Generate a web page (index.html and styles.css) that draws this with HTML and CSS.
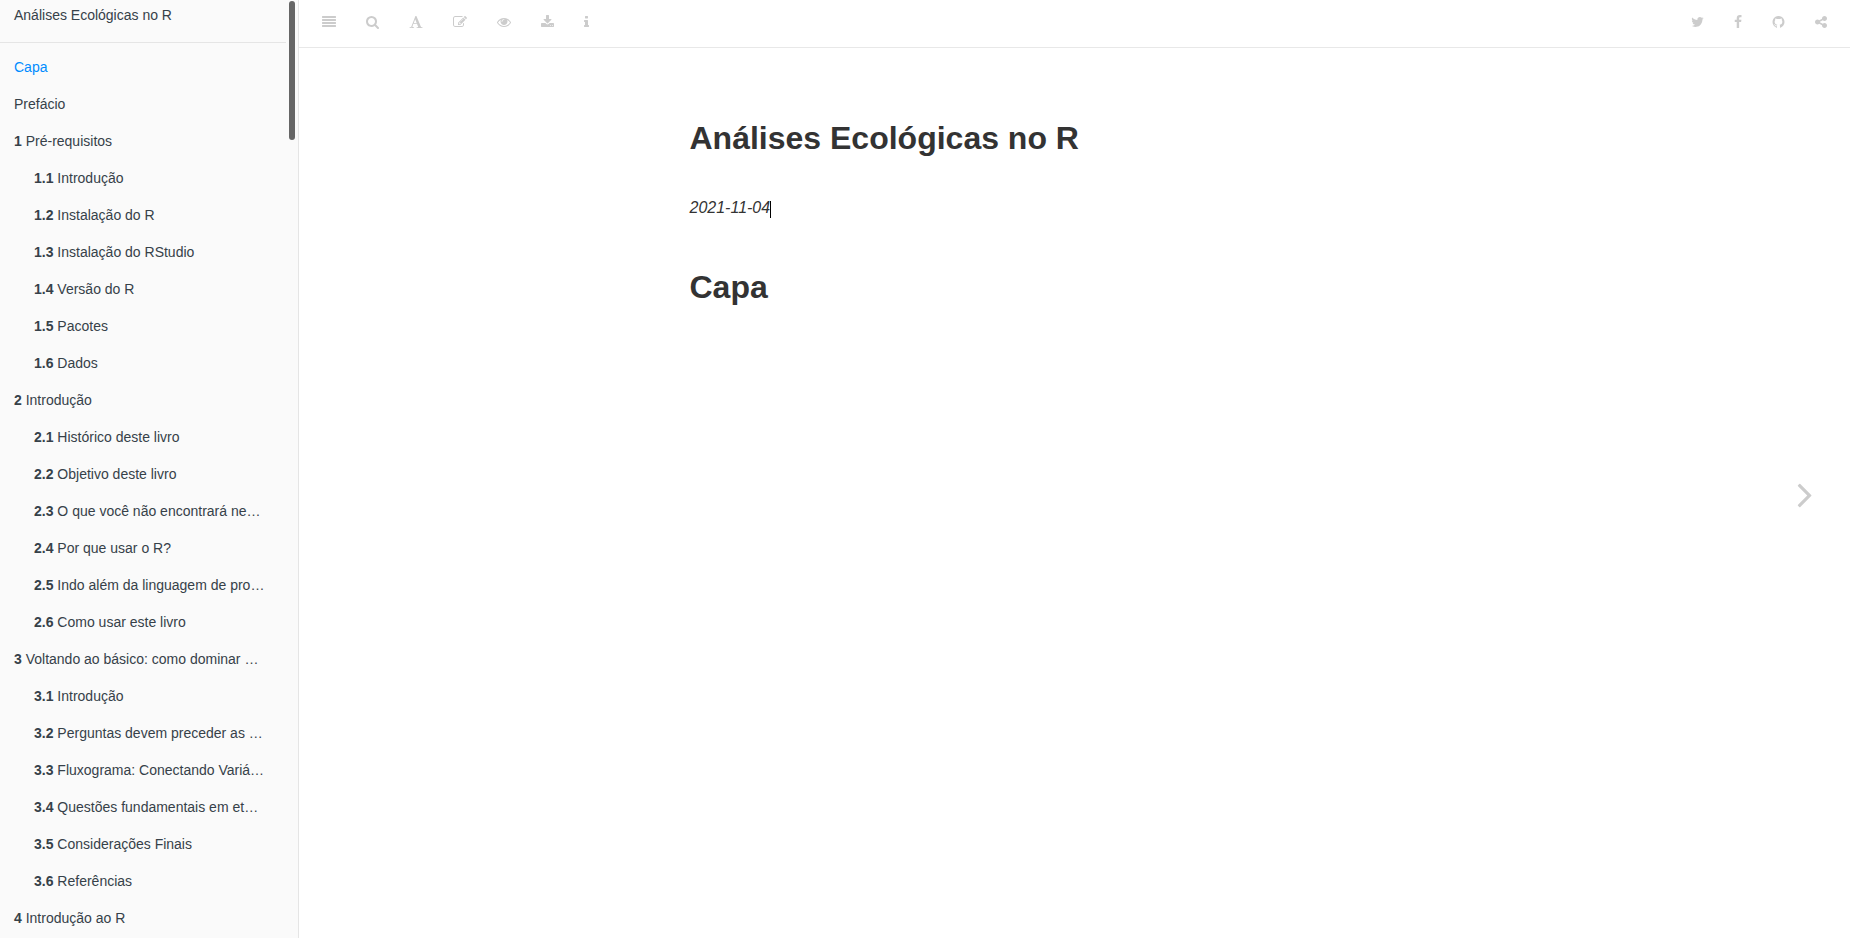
FILE: index.html
```html
<!DOCTYPE html>
<html lang="pt-BR">
<head>
<meta charset="utf-8">
<title>Análises Ecológicas no R</title>
<link rel="stylesheet" href="styles.css">
</head>
<body>
<div class="book">
  <aside class="sidebar">
    <nav class="summary" aria-label="Sumário">
      <a class="book-title" href="#">Análises Ecológicas no R</a>
      <ul class="chapters">
        <li><a class="active" href="#">Capa</a></li>
        <li><a href="#">Prefácio</a></li>
        <li><a href="#"><b>1</b> Pré-requisitos</a>
          <ul>
            <li><a href="#"><b>1.1</b> Introdução</a></li>
            <li><a href="#"><b>1.2</b> Instalação do R</a></li>
            <li><a href="#"><b>1.3</b> Instalação do RStudio</a></li>
            <li><a href="#"><b>1.4</b> Versão do R</a></li>
            <li><a href="#"><b>1.5</b> Pacotes</a></li>
            <li><a href="#"><b>1.6</b> Dados</a></li>
          </ul>
        </li>
        <li><a href="#"><b>2</b> Introdução</a>
          <ul>
            <li><a href="#"><b>2.1</b> Histórico deste livro</a></li>
            <li><a href="#"><b>2.2</b> Objetivo deste livro</a></li>
            <li><a href="#"><b>2.3</b> O que você não encontrará ne…</a></li>
            <li><a href="#"><b>2.4</b> Por que usar o R?</a></li>
            <li><a href="#"><b>2.5</b> Indo além da linguagem de pro…</a></li>
            <li><a href="#"><b>2.6</b> Como usar este livro</a></li>
          </ul>
        </li>
        <li><a href="#"><b>3</b> Voltando ao básico: como dominar …</a>
          <ul>
            <li><a href="#"><b>3.1</b> Introdução</a></li>
            <li><a href="#"><b>3.2</b> Perguntas devem preceder as …</a></li>
            <li><a href="#"><b>3.3</b> Fluxograma: Conectando Variá…</a></li>
            <li><a href="#"><b>3.4</b> Questões fundamentais em et…</a></li>
            <li><a href="#"><b>3.5</b> Considerações Finais</a></li>
            <li><a href="#"><b>3.6</b> Referências</a></li>
          </ul>
        </li>
        <li><a href="#"><b>4</b> Introdução ao R</a></li>
      </ul>
    </nav>
    <div class="scroll-thumb"></div>
  </aside>
  <div class="page">
    <header class="toolbar">
      <div class="tools">
        <button type="button" aria-label="Sumário"><svg class="w14" viewBox="0 0 1792 1792"><path d="M1792 1344v128q0 26-19 45t-45 19h-1664q-26 0-45-19t-19-45v-128q0-26 19-45t45-19h1664q26 0 45 19t19 45zm0-384v128q0 26-19 45t-45 19h-1664q-26 0-45-19t-19-45v-128q0-26 19-45t45-19h1664q26 0 45 19t19 45zm0-384v128q0 26-19 45t-45 19h-1664q-26 0-45-19t-19-45v-128q0-26 19-45t45-19h1664q26 0 45 19t19 45zm0-384v128q0 26-19 45t-45 19h-1664q-26 0-45-19t-19-45v-128q0-26 19-45t45-19h1664q26 0 45 19t19 45z"/></svg></button>
        <button type="button" aria-label="Buscar"><svg class="w13" viewBox="64 0 1664 1792"><path d="M1216 832q0-185-131.5-316.5t-316.5-131.5-316.5 131.5-131.5 316.5 131.5 316.5 316.5 131.5 316.5-131.5 131.5-316.5zm512 832q0 52-38 90t-90 38q-54 0-90-38l-343-342q-179 124-399 124-143 0-273.5-55.5t-225-150-150-225-55.5-273.5 55.5-273.5 150-225 225-150 273.5-55.5 273.5 55.5 225 150 150 225 55.5 273.5q0 220-124 399l343 343q37 37 37 90z"/></svg></button>
        <button type="button" aria-label="Fonte"><svg class="w14" viewBox="0 0 1792 1792"><path d="M789 559l-170 450q33 0 136.5 2t160.5 2q19 0 57-2-87-253-184-452zm-725 1105l2-79q23-7 56-12.5t57-10.5 49.5-14.5 44.5-29 31-50.5l237-616 280-724h128q8 14 11 21l205 480q33 78 106 257.5t114 274.5q15 34 58 144.5t72 168.5q20 45 35 57 19 15 88 29.5t84 20.5q6 38 6 57 0 4-.5 13t-.5 13q-63 0-190-8t-191-8q-76 0-215 7t-178 8q0-43 4-78l131-28q1 0 12.5-2.5t15.5-3.5 14.5-4.5 15-6.5 11-8 9-11 2.5-14q0-16-31-96.5t-72-177.5-42-100l-450-2q-26 58-76.5 195.5t-50.5 162.5q0 22 14 37.5t43.5 24.5 48.5 13.5 57 8.5 41 4q1 19 1 58 0 9-2 27-58 0-174.5-10t-174.5-10q-8 0-26.5 4t-21.5 4q-80 14-188 14z"/></svg></button>
        <button type="button" aria-label="Editar"><svg class="w14" viewBox="0 0 1792 1792"><path d="M888 1184l116-116-152-152-116 116v56h96v96h56zm440-720q-16-16-33 1l-350 350q-17 17-1 33t33-1l350-350q17-17 1-33zm80 594v190q0 119-84.5 203.5t-203.5 84.5h-832q-119 0-203.5-84.5t-84.5-203.5v-832q0-119 84.5-203.5t203.5-84.5h832q63 0 117 25 15 7 18 23 3 17-9 29l-49 49q-14 14-32 8-23-6-45-6h-832q-66 0-113 47t-47 113v832q0 66 47 113t113 47h832q66 0 113-47t47-113v-126q0-13 9-22l64-64q15-15 35-7t20 29zm-96-738l288 288-672 672h-288v-288zm444 132l-92 92-288-288 92-92q28-28 68-28t68 28l152 152q28 28 28 68t-28 68z"/></svg></button>
        <button type="button" aria-label="Visualizar"><svg class="w14" viewBox="0 0 1792 1792"><path d="M1664 960q-152-236-381-353 61 104 61 225 0 185-131.5 316.5t-316.5 131.5-316.5-131.5-131.5-316.5q0-121 61-225-229 117-381 353 133 205 333.5 326.5t434.5 121.5 434.5-121.5 333.5-326.5zm-720-384q0-20-14-34t-34-14q-125 0-214.5 89.5t-89.5 214.5q0 20 14 34t34 14 34-14 14-34q0-86 61-147t147-61q20 0 34-14t14-34zm848 384q0 34-20 69-140 230-376.5 368.5t-499.5 138.5-499.5-139-376.5-368q-20-35-20-69t20-69q140-229 376.5-368t499.5-139 499.5 139 376.5 368q20 35 20 69z"/></svg></button>
        <button type="button" aria-label="Baixar"><svg class="w13" viewBox="64 0 1664 1792"><path d="M1344 1344q0-26-19-45t-45-19-45 19-19 45 19 45 45 19 45-19 19-45zm256 0q0-26-19-45t-45-19-45 19-19 45 19 45 45 19 45-19 19-45zm128-224v320q0 40-28 68t-68 28h-1472q-40 0-68-28t-28-68v-320q0-40 28-68t68-28h465l135 136q58 56 136 56t136-56l136-136h464q40 0 68 28t28 68zm-325-569q17 41-14 70l-448 448q-18 19-45 19t-45-19l-448-448q-31-29-14-70 17-39 59-39h256v-448q0-26 19-45t45-19h256q26 0 45 19t19 45v448h256q42 0 59 39z"/></svg></button>
        <button type="button" aria-label="Informações"><svg class="w5" viewBox="576 0 640 1792"><path d="M1216 1344v128q0 26-19 45t-45 19h-512q-26 0-45-19t-19-45v-128q0-26 19-45t45-19h64v-384h-64q-26 0-45-19t-19-45v-128q0-26 19-45t45-19h384q26 0 45 19t19 45v576h64q26 0 45 19t19 45zm-128-1152v192q0 26-19 45t-45 19h-256q-26 0-45-19t-19-45v-192q0-26 19-45t45-19h256q26 0 45 19t19 45z"/></svg></button>
      </div>
      <div class="tools">
        <button type="button" aria-label="Twitter"><svg class="w13" viewBox="64 0 1664 1792"><path d="M1684 408q-67 98-162 167 1 14 1 42 0 130-38 259.5t-115.5 248.5-184.5 210.5-258 146-323 54.5q-271 0-496-145 35 4 78 4 225 0 401-138-105-2-188-64.5t-114-159.5q33 5 61 5 43 0 85-11-112-23-185.5-111.5t-73.5-205.5v-4q68 38 146 41-66-44-105-115t-39-154q0-88 44-163 121 149 294.5 238.5t371.5 99.5q-8-38-8-74 0-134 94.5-228.5t228.5-94.5q140 0 236 102 109-21 205-78-37 115-142 178 93-10 186-50z"/></svg></button>
        <button type="button" aria-label="Facebook"><svg class="w8" viewBox="384 0 1024 1792"><path d="M1343 12v264h-157q-86 0-116 36t-30 108v189h293l-39 296h-254v759h-306v-759h-255v-296h255v-218q0-186 104-288.5t277-102.5q147 0 228 12z"/></svg></button>
        <button type="button" aria-label="GitHub"><svg class="w13" viewBox="64 0 1664 1792"><path d="M896 128q209 0 385.5 103t279.5 279.5 103 385.5q0 251-146.5 451.5t-378.5 277.5q-27 5-40-7t-13-30q0-3 .5-76.5t.5-134.5q0-97-52-142 57-6 102.5-18t94-39 81-66.5 53-105 20.5-150.5q0-119-79-206 37-91-8-204-28-9-81 11t-92 44l-38 24q-93-26-192-26t-192 26q-16-11-42.5-27t-83.5-38.5-85-13.5q-45 113-8 204-79 87-79 206 0 85 20.5 150t52.5 105 80.5 67 94 39 102.5 18q-39 36-49 103-21 10-45 15t-57 5-65.5-21.5-55.5-62.5q-19-32-48.5-52t-49.5-24l-20-3q-21 0-29 4.5t-5 11.5 9 14 13 12l7 5q22 10 43.5 38t31.5 51l10 23q13 38 44 61.5t67 30 69.5 7 55.5-3.5l23-4q0 38 .5 88.5t.5 54.5q0 18-13 30t-40 7q-232-77-378.5-277.5t-146.5-451.5q0-209 103-385.5t279.5-279.5 385.5-103z"/></svg></button>
        <button type="button" aria-label="Compartilhar"><svg class="w12" viewBox="128 0 1536 1792"><path d="M1344 1024q133 0 226.5 93.5t93.5 226.5-93.5 226.5-226.5 93.5-226.5-93.5-93.5-226.5q0-12 2-34l-360-180q-92 86-218 86-133 0-226.5-93.5t-93.5-226.5 93.5-226.5 226.5-93.5q126 0 218 86l360-180q-2-22-2-34 0-133 93.5-226.5t226.5-93.5 226.5 93.5 93.5 226.5-93.5 226.5-226.5 93.5q-126 0-218-86l-360 180q2 22 2 34t-2 34l360 180q92-86 218-86z"/></svg></button>
      </div>
    </header>
    <main class="content">
      <h1>Análises Ecológicas no R</h1>
      <p class="date"><em>2021-11-04</em><span class="caret"></span></p>
      <h1>Capa</h1>
    </main>
    <a class="next" href="#" aria-label="Próxima página"><svg viewBox="0 0 1792 1792"><path d="M1171 960q0 13-10 23l-466 466q-10 10-23 10t-23-10l-50-50q-10-10-10-23t10-23l393-393-393-393q-10-10-10-23t10-23l50-50q10-10 23-10t23 10l466 466q10 10 10 23z"/></svg></a>
  </div>
</div>
</body>
</html>
```
FILE: styles.css
```css
* {
  box-sizing: border-box;
}

body {
  margin: 0;
  font-family: "Liberation Sans", Arial, sans-serif;
  color: #333;
  background: #fff;
}

.book {
  display: flex;
  height: 100vh;
  overflow: hidden;
}

.sidebar {
  position: relative;
  flex: 0 0 299px;
  padding-right: 12px;
  overflow: hidden;
  background: #fafafa;
  border-right: 1px solid #e5e5e5;
  font-size: 14px;
  line-height: 17px;
}

.sidebar a {
  display: block;
  padding: 10px 14px;
  overflow: hidden;
  white-space: nowrap;
  color: #364149;
  text-decoration: none;
}

.sidebar a.active {
  color: #008cff;
}

.sidebar .book-title {
  padding: 7px 14px 18px;
  border-bottom: 1px solid #e5e5e5;
}

.sidebar ul {
  margin: 0;
  padding: 0;
  list-style: none;
}

.sidebar .chapters {
  padding-top: 6px;
}

.sidebar ul ul {
  padding-left: 20px;
}

.scroll-thumb {
  position: absolute;
  top: 1px;
  right: 3px;
  width: 6px;
  height: 139px;
  border-radius: 3px;
  background: #666;
}

.page {
  position: relative;
  flex: 1;
  min-width: 0;
}

.toolbar {
  display: flex;
  justify-content: space-between;
  height: 48px;
  padding: 0 8px 4px;
  border-bottom: 1px solid #e8e8e8;
}

.tools {
  display: flex;
}

.tools button {
  display: flex;
  align-items: center;
  padding: 0 15px;
  border: 0;
  background: none;
  color: #ccc;
  cursor: pointer;
}

svg {
  display: block;
  height: 14px;
  fill: currentColor;
}

.w14 { width: 14px; }
.w13 { width: 13px; }
.w12 { width: 12px; }
.w8 { width: 8px; }
.w5 { width: 5px; }

.content {
  max-width: 800px;
  margin: 0 auto;
  padding: 70px 15px 40px;
}

.content h1 {
  margin: 0;
  font-size: 32px;
  line-height: 40px;
}

.date {
  display: flex;
  align-items: center;
  margin: 37px 0 46px;
  font-size: 16px;
  line-height: 26px;
}

.caret {
  width: 1px;
  height: 17px;
  margin-top: 2px;
  background: #000;
}

.next {
  position: absolute;
  top: 50px;
  right: 0;
  bottom: 0;
  display: flex;
  align-items: center;
  justify-content: center;
  width: 90px;
  color: #ccc;
}

.next svg {
  width: 42px;
  height: 42px;
}
```
